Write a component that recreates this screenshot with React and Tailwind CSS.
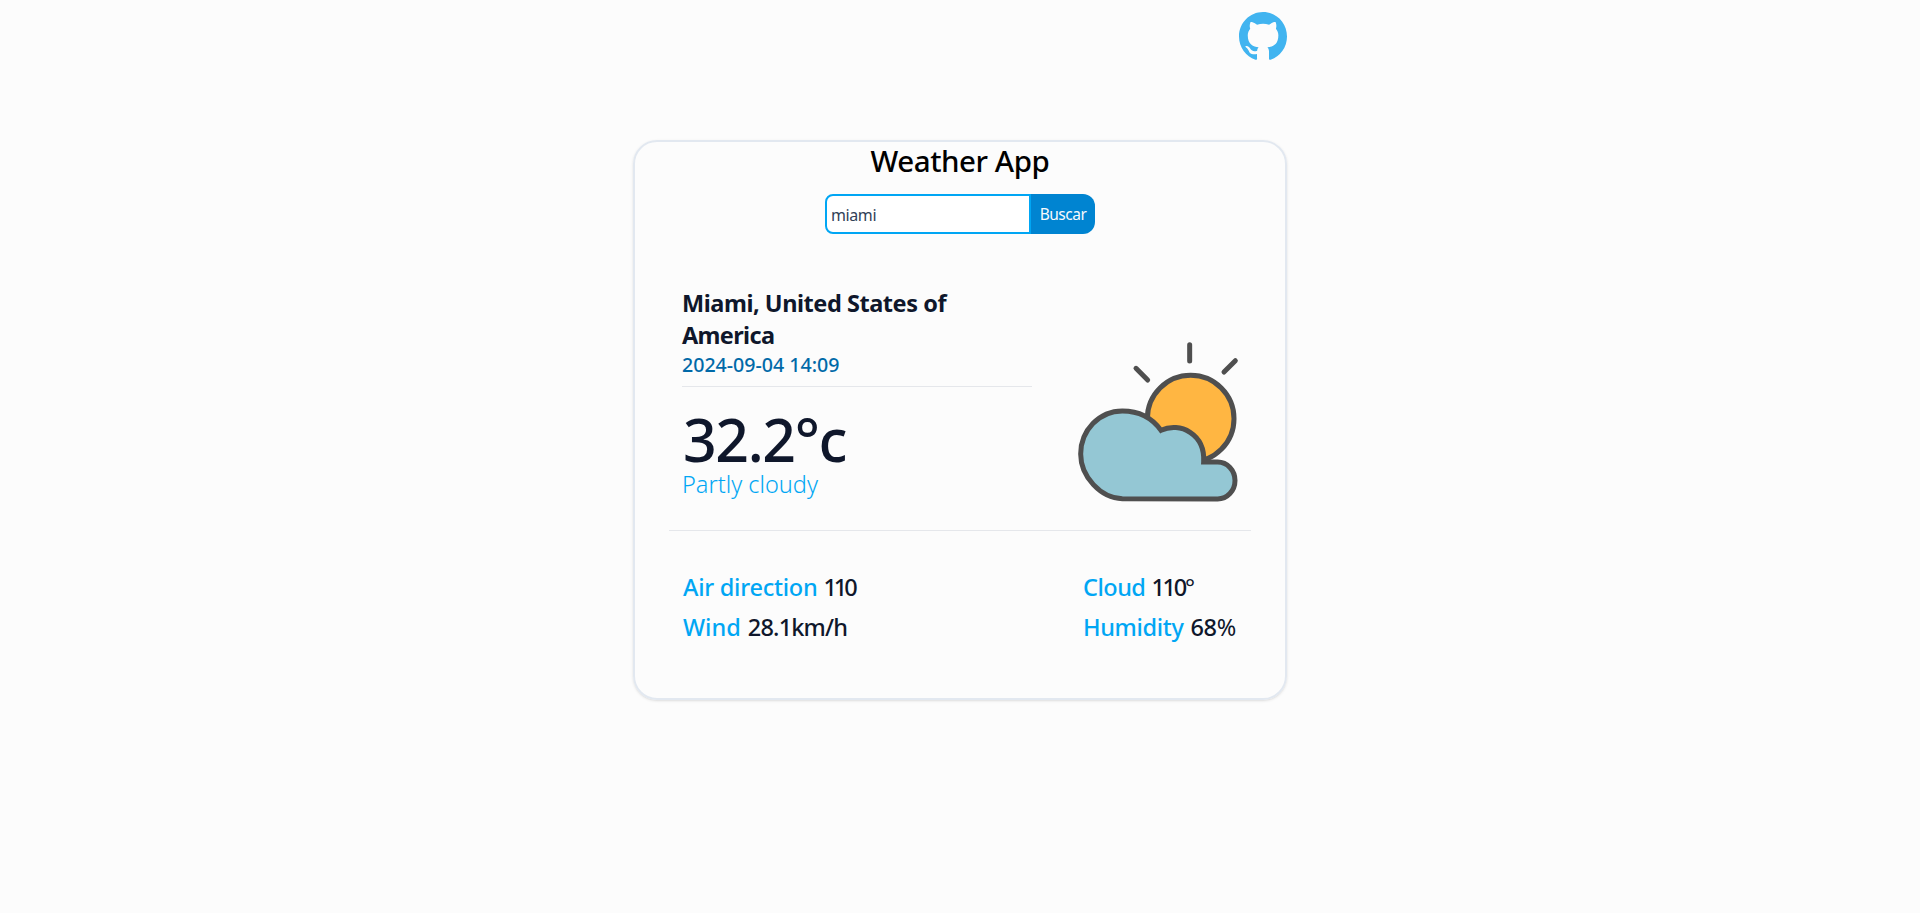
import { BsGithub } from "react-icons/bs";

function PartlyCloudyIcon() {
  return (
    <svg
      viewBox="0 0 600 570"
      className="h-[190px] w-[200px] shrink-0"
      fill="none"
      stroke="#4f4f4f"
      strokeWidth="15"
    >
      <g strokeLinecap="round">
        <path d="M389 44V93" />
        <path d="M228 115L263 150" />
        <path d="M526 92L492 126" />
      </g>
      <circle cx="392" cy="266" r="130" fill="#ffb642" />
      <path
        fill="#94c7d4"
        d="M473 507L187 506C122 504 62 440 62 372A125 129 0 0 1 187 243C235 243 275 262 303 301C360 274 436 312 431 396H473A52 55.5 0 0 1 473 507Z"
      />
    </svg>
  );
}

function Stat({ label, value, labelClass = "", valueClass = "", unit }) {
  return (
    <p className="flex h-8 gap-1.5 whitespace-nowrap text-[23.5px] leading-8 font-medium">
      <span className={`text-sky-500 ${labelClass}`}>{label}</span>
      <span className={`text-slate-900 ${valueClass}`}>
        {value}
        {unit && <span className="font-normal">{unit}</span>}
      </span>
    </p>
  );
}

export default function App() {
  return (
    <div className="min-h-screen bg-[#fcfcfc] font-['Noto_Sans','Open_Sans',sans-serif] text-black">
      <div className="mx-auto w-[654px]">
        <header className="flex justify-end pt-3">
          <a href="#" aria-label="GitHub">
            <BsGithub
              viewBox="0 0 16 15.65"
              preserveAspectRatio="none"
              className="size-12 text-[#41b4f0]"
            />
          </a>
        </header>

        <main className="mt-20 h-[560px] rounded-3xl border-2 border-slate-200 shadow-sm">
          <h1 className="pt-px text-center text-[29.5px] leading-9 font-medium tracking-[-0.45px]">
            Weather App
          </h1>

          <form className="mt-[15px] flex h-10 justify-center">
            <input
              type="text"
              defaultValue="miami"
              className="w-[206px] rounded-l-lg border-2 border-sky-500 bg-white pt-0.5 pl-1 text-base tracking-[-0.4px] text-slate-700 outline-none"
            />
            <button
              type="button"
              className="w-16 rounded-r-xl bg-sky-600 pt-0.5 text-center text-[15.5px] tracking-[-0.5px] text-slate-50"
            >
              Buscar
            </button>
          </form>

          <section className="mx-[34px] mt-[52px] flex h-[245px] border-b border-gray-200">
            <div className="ml-[13px] w-[350px] shrink-0">
              <div className="h-[101px] border-b border-gray-200 pt-px">
                <h2 className="text-[23.5px] leading-8 font-bold tracking-[-0.45px] text-slate-900">
                  Miami, United States of{" "}
                  <span className="tracking-[-0.65px]">America</span>
                </h2>
                <p className="text-[19.6px] leading-7 font-medium text-sky-700">
                  2024-09-04 14:09
                </p>
              </div>
              <p className="mt-[23px] ml-px text-[59px] leading-[58px] font-medium tracking-[-1.4px] text-slate-900">
                32.2°c
              </p>
              <p className="text-[23.5px] leading-8 font-light text-sky-500">
                Partly cloudy
              </p>
            </div>
            <div className="mt-11 ml-7">
              <PartlyCloudyIcon />
            </div>
          </section>

          <section className="mt-10 mr-[47px] ml-12 flex">
            <div className="flex w-[400px] shrink-0 flex-col gap-2">
              <Stat
                label="Air direction"
                labelClass="tracking-[-0.25px]"
                value="110"
                valueClass="tracking-[-3px]"
              />
              <Stat
                label="Wind"
                value="28.1km/h"
                valueClass="ml-px tracking-[-0.8px]"
              />
            </div>
            <div className="flex flex-col gap-2">
              <Stat
                label="Cloud"
                labelClass="tracking-[-0.5px]"
                value="110"
                unit="°"
                valueClass="tracking-[-2.3px]"
              />
              <Stat
                label="Humidity"
                labelClass="tracking-[-0.35px]"
                value="68"
                unit="%"
                valueClass="ml-px tracking-[-0.3px]"
              />
            </div>
          </section>
        </main>
      </div>
    </div>
  );
}
